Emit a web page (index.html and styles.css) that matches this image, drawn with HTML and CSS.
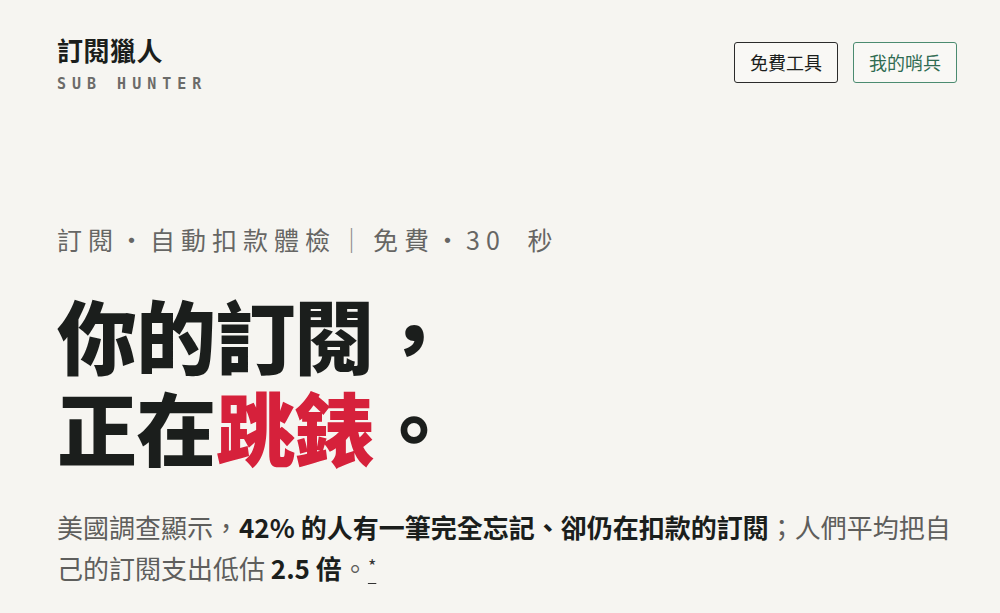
FILE: index.html
```html
<!DOCTYPE html>
<html lang="zh-Hant">
<head>
<meta charset="utf-8">
<title>訂閱獵人 SUB HUNTER</title>
<link rel="stylesheet" href="styles.css">
</head>
<body>
<div class="page">
  <header class="top">
    <div class="brand">
      <div class="brand-name">訂閱獵人</div>
      <div class="brand-sub">SUB HUNTER</div>
    </div>
    <nav class="nav">
      <a class="btn btn-dark" href="#">免費工具</a>
      <a class="btn btn-green" href="#">我的哨兵</a>
    </nav>
  </header>
  <section class="hero">
    <p class="eyebrow">訂閱・自動扣款體檢<span class="sep">｜</span>免費・30 秒</p>
    <h1 class="headline">你的訂閱，<br>正在<span class="hot">跳錶</span>。</h1>
    <p class="lead">美國調查顯示，<strong>42% 的人有一筆完全忘記、卻仍在扣款的訂閱</strong>；人們平均把自己的訂閱支出低估 <strong>2.5 倍</strong>。<a class="ref" href="#">*</a></p>
  </section>
</div>
</body>
</html>
```
FILE: styles.css
```css
html, body {
  margin: 0;
  padding: 0;
}
body {
  background: #f6f5f1;
  color: #1b1e1c;
  font-family: "Noto Sans CJK TC", "Noto Sans", sans-serif;
}
.page {
  padding: 34px 43px 0 57px;
}
.top {
  display: flex;
  justify-content: space-between;
  align-items: flex-start;
}
.brand-name {
  font-size: 26px;
  font-weight: 700;
  line-height: 32px;
  letter-spacing: 0.02em;
  color: #1b1e1c;
}
.brand-sub {
  margin-top: 8px;
  font-family: "DejaVu Sans Mono", monospace;
  font-weight: 700;
  font-size: 15px;
  line-height: 20px;
  letter-spacing: 0.4em;
  color: #6b6b69;
}
.nav {
  display: flex;
  gap: 15px;
  margin-top: 8px;
}
.btn {
  display: block;
  font-size: 18px;
  line-height: 25px;
  padding: 7px 15px;
  border-radius: 3px;
  text-decoration: none;
  background: #f9f8f5;
}
.btn-dark {
  border: 1px solid #2b2b2b;
  color: #1b1e1c;
}
.btn-green {
  border: 1px solid #4b8b70;
  color: #2f6b52;
}
.hero {
  padding-top: 127px;
}
.eyebrow {
  margin: 0;
  font-size: 25px;
  line-height: 36px;
  letter-spacing: 6px;
  word-spacing: 10px;
  color: #666664;
}
.sep {
  margin: 0 3px;
  color: #8a8a88;
}
.headline {
  margin: 30px 0 0;
  font-size: 80px;
  font-weight: 900;
  line-height: 92px;
  letter-spacing: -0.01em;
  color: #1b1e1c;
}
.hot {
  color: #d6213b;
}
.lead {
  margin: 36px 0 0;
  font-size: 26px;
  line-height: 39px;
  color: #5e5e5c;
}
.lead strong {
  font-weight: 700;
  color: #1b1e1c;
}
.ref {
  color: #333;
  font-size: 18px;
  vertical-align: 6px;
  text-decoration: underline;
  text-underline-offset: 10px;
}
```
